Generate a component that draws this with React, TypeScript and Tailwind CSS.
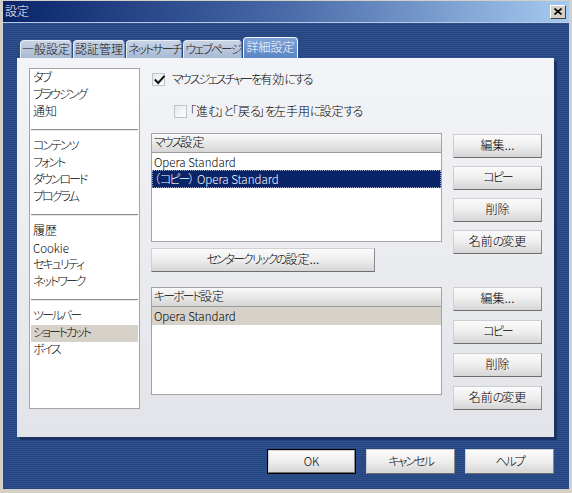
import React from "react";

const JP = "font-['Liberation_Sans','Noto_Sans_CJK_JP',sans-serif] font-light [font-feature-settings:'palt']";
const LAT = "font-['Noto_Sans_CJK_JP',sans-serif] font-light text-[11.5px]";

// Kana glyphs in the CJK font are wider than the UI font they stand in for; tighten them.
function T({ s }: { s: string }) {
  return (
    <>
      {Array.from(s).map((c, i) =>
        /[\u3041-\u30ff]/.test(c) ? (
          <span key={i} className="tracking-[-2px]">
            {c}
          </span>
        ) : (
          <React.Fragment key={i}>{c}</React.Fragment>
        )
      )}
    </>
  );
}

function Btn({ children, className = "" }: { children: React.ReactNode; className?: string }) {
  return (
    <div
      className={
        "flex items-center justify-center border border-t-[#cfcfcf] border-l-[#cfcfcf] border-r-[#8a8a8a] border-b-[#6e6e6e] bg-linear-to-b from-[#fbfbfb] via-[#eeeeee] to-[#d5d5d5] text-[12px] text-black leading-none " +
        className
      }
    >
      {children}
    </div>
  );
}

function Tab({ label, active = false }: { label: string; active?: boolean }) {
  if (active) {
    return (
      <div className="flex h-[21px] items-center justify-center rounded-t-[4px] border border-b-0 border-[#f4f7fc] bg-linear-to-b from-[#7fa3d8] to-[#5a84c4] px-[2px] text-[12px] text-white">
        <T s={label} />
      </div>
    );
  }
  return (
    <div className="flex h-[18px] items-center justify-center rounded-t-[4px] border border-b-0 border-t-[#e6ecf5] border-l-[#e6ecf5] border-r-[#7d8fae] bg-linear-to-b from-[#c9d4e6] to-[#a9b9d3] px-[1px] text-[12px] text-[#111]">
      <T s={label} />
    </div>
  );
}

function Row({ children, active = false }: { children: React.ReactNode; active?: boolean }) {
  return (
    <div className={"h-[17px] pl-[2px] text-[12px] leading-[17px] text-black " + (active ? "bg-[#d6d2ca]" : "")}>
      {children}
    </div>
  );
}

function Sep() {
  return (
    <div className="flex h-[17px] items-center">
      <div className="h-[2px] w-full border-t border-t-[#8c8c8c] border-b border-b-[#e8e8e8]" />
    </div>
  );
}

function ListHeader({ label }: { label: string }) {
  return (
    <div className="h-[19px] border-b border-b-[#9c9c9c] bg-linear-to-b from-[#fafafa] to-[#d6d6d6] pl-[2px] text-[12px] leading-[19px] text-black">
      <T s={label} />
    </div>
  );
}

function CheckBox({ checked }: { checked: boolean }) {
  return (
    <div className="relative h-[13px] w-[13px] border border-[#bfc3c9] bg-linear-to-br from-[#e6e8ec] to-[#ffffff]">
      {checked && (
        <svg className="absolute left-[0px] top-[0px]" width="13" height="13" viewBox="0 0 13 13">
          <path d="M2.5 6.2 L5.2 9 L10.8 2.6" fill="none" stroke="#111" strokeWidth="2" strokeLinecap="square" />
        </svg>
      )}
    </div>
  );
}

function SideButtons({ gap }: { gap: string }) {
  return (
    <div className={"ml-[11px] flex w-[89px] flex-col " + gap}>
      <Btn className="h-[24px]">編集...</Btn>
      <Btn className="h-[24px]">
        <T s="コピー" />
      </Btn>
      <Btn className="h-[24px]">削除</Btn>
      <Btn className="h-[24px]">
        <T s="名前の変更" />
      </Btn>
    </div>
  );
}

export default function App() {
  return (
    <div className={"flex h-[493px] w-[572px] flex-col bg-[#d4d0c8] px-[3px] pb-[4px] pt-[1px] " + JP}>
      {/* title bar */}
      <div className="flex h-[21px] shrink-0 items-center justify-between bg-linear-to-r from-[#0a246a] via-[#4a6aa8] to-[#a6caf0] pl-[2px] pr-[3px]">
        <span className="text-[12px] leading-none text-white">設定</span>
        <div className="flex h-[14px] w-[16px] items-center justify-center border border-t-white border-l-white border-r-[#404040] border-b-[#404040] bg-[#d4d0c8]">
          <svg width="8" height="7" viewBox="0 0 8 7">
            <path d="M0.5 0.5 L7.5 6.5 M7.5 0.5 L0.5 6.5" stroke="#000" strokeWidth="1.6" />
          </svg>
        </div>
      </div>
      <div className="h-[1px] shrink-0 bg-[#b9c9e2]" />

      {/* dialog body */}
      <div className="flex flex-1 flex-col bg-[repeating-linear-gradient(180deg,#2d4f8d_0px,#2d4f8d_1px,#26467f_1px,#26467f_2px)] pl-[14px] pt-[14px]">
        <div className="ml-[3px] flex h-[21px] items-end gap-[1px]">
          <Tab label="一般設定" />
          <Tab label="認証管理" />
          <Tab label="ネットサーチ" />
          <Tab label="ウェブページ" />
          <Tab label="詳細設定" active />
        </div>

        <div className="flex h-[379px] w-[537px] bg-linear-to-b from-[#f3f4f7] to-[#e2e4e9] pl-[12px] pt-[10px] shadow-[3px_3px_0_#1b3263]">
          {/* category list */}
          <div className="flex h-[341px] w-[111px] flex-col border border-[#a4a4a4] bg-white px-[1px] pt-[1px]">
            <Row><T s="タブ" /></Row>
            <Row><T s="ブラウジング" /></Row>
            <Row>通知</Row>
            <Sep />
            <Row><T s="コンテンツ" /></Row>
            <Row><T s="フォント" /></Row>
            <Row><T s="ダウンロード" /></Row>
            <Row><T s="プログラム" /></Row>
            <Sep />
            <Row>履歴</Row>
            <Row>
              <span className={LAT}>Cookie</span>
            </Row>
            <Row><T s="セキュリティ" /></Row>
            <Row><T s="ネットワーク" /></Row>
            <Sep />
            <Row><T s="ツールバー" /></Row>
            <Row active><T s="ショートカット" /></Row>
            <Row><T s="ボイス" /></Row>
          </div>

          <div className="ml-[11px] flex w-[391px] flex-col">
            <div className="mt-[5px] flex h-[13px] items-center">
              <div className="ml-[1px]">
                <CheckBox checked />
              </div>
              <span className="ml-[7px] text-[12px] leading-none text-black">
                <T s="マウスジェスチャーを有効にする" />
              </span>
            </div>
            <div className="mt-[19px] flex h-[13px] items-center">
              <div className="ml-[23px]">
                <CheckBox checked={false} />
              </div>
              <span className="ml-[3px] text-[12px] leading-none text-black">
                <T s="「進む」と「戻る」を左手用に設定する" />
              </span>
            </div>

            {/* mouse setups */}
            <div className="mt-[15px] flex h-[109px] items-start">
              <div className="flex h-[109px] w-[291px] flex-col border border-[#a4a4a4] bg-white">
                <ListHeader label="マウス設定" />
                <div className="h-[17px] pl-[2px] leading-[17px] text-black">
                  <span className={LAT}>Opera Standard</span>
                </div>
                <div className="h-[18px] border border-dotted border-[#9aa6c0] bg-[#0a246a] pl-[1px] text-[12px] leading-[16px] text-white">
                  <T s="（コピー）" />
                  <span className={LAT}> Opera Standard</span>
                </div>
              </div>
              <div className="mt-[1px]">
                <SideButtons gap="gap-[8px]" />
              </div>
            </div>

            <Btn className="mt-[6px] h-[24px] w-[224px]">
              <T s="センタークリックの設定..." />
            </Btn>

            {/* keyboard setups */}
            <div className="mt-[15px] flex h-[108px] items-start">
              <div className="flex h-[108px] w-[291px] flex-col border border-[#a4a4a4] bg-white">
                <ListHeader label="キーボード設定" />
                <div className="h-[18px] bg-[#d6d2ca] pl-[2px] leading-[18px] text-black">
                  <span className={LAT}>Opera Standard</span>
                </div>
              </div>
              <SideButtons gap="gap-[9px]" />
            </div>
          </div>
        </div>

        {/* dialog buttons */}
        <div className="mt-[12px] flex justify-end gap-[10px] pr-[15px]">
          <div className="h-[25px] w-[89px] border border-black">
            <Btn className="h-full w-full">
              <span className={LAT}>OK</span>
            </Btn>
          </div>
          <Btn className="h-[25px] w-[89px]">
            <T s="キャンセル" />
          </Btn>
          <Btn className="h-[25px] w-[89px]">
            <T s="ヘルプ" />
          </Btn>
        </div>
      </div>
    </div>
  );
}
